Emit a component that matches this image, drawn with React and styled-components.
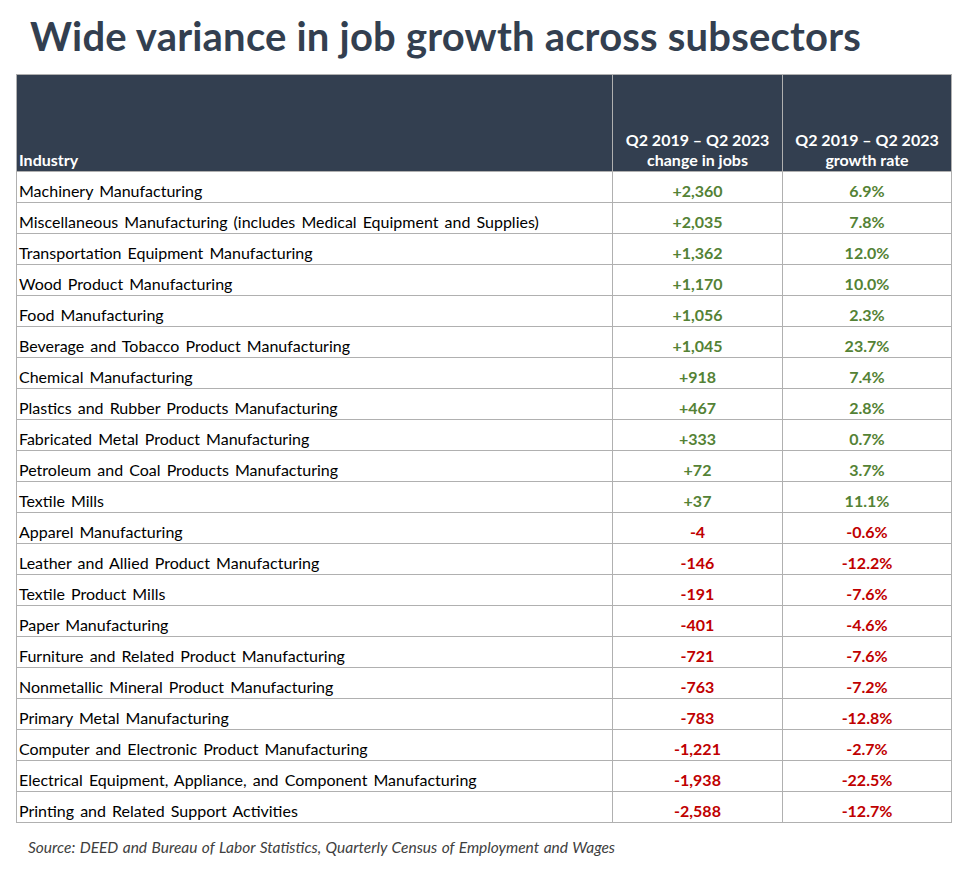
import React from "react"
import styled, { createGlobalStyle } from "styled-components"

const rows = [
  ["Machinery Manufacturing", "+2,360", "6.9%"],
  ["Miscellaneous Manufacturing (includes Medical Equipment and Supplies)", "+2,035", "7.8%"],
  ["Transportation Equipment Manufacturing", "+1,362", "12.0%"],
  ["Wood Product Manufacturing", "+1,170", "10.0%"],
  ["Food Manufacturing", "+1,056", "2.3%"],
  ["Beverage and Tobacco Product Manufacturing", "+1,045", "23.7%"],
  ["Chemical Manufacturing", "+918", "7.4%"],
  ["Plastics and Rubber Products Manufacturing", "+467", "2.8%"],
  ["Fabricated Metal Product Manufacturing", "+333", "0.7%"],
  ["Petroleum and Coal Products Manufacturing", "+72", "3.7%"],
  ["Textile Mills", "+37", "11.1%"],
  ["Apparel Manufacturing", "-4", "-0.6%"],
  ["Leather and Allied Product Manufacturing", "-146", "-12.2%"],
  ["Textile Product Mills", "-191", "-7.6%"],
  ["Paper Manufacturing", "-401", "-4.6%"],
  ["Furniture and Related Product Manufacturing", "-721", "-7.6%"],
  ["Nonmetallic Mineral Product Manufacturing", "-763", "-7.2%"],
  ["Primary Metal Manufacturing", "-783", "-12.8%"],
  ["Computer and Electronic Product Manufacturing", "-1,221", "-2.7%"],
  ["Electrical Equipment, Appliance, and Component Manufacturing", "-1,938", "-22.5%"],
  ["Printing and Related Support Activities", "-2,588", "-12.7%"],
]

const App = () => {
  return (
    <Page>
      <GlobalStyle />
      <Title>Wide variance in job growth across subsectors</Title>
      <Table>
        <colgroup>
          <col style={{ width: 596 }} />
          <col style={{ width: 170 }} />
          <col style={{ width: 169 }} />
        </colgroup>
        <thead>
          <tr>
            <HeadCell>Industry</HeadCell>
            <HeadCell center>
              Q2 2019 – Q2 2023
              <br />
              change in jobs
            </HeadCell>
            <HeadCell center>
              Q2 2019 – Q2 2023
              <br />
              growth rate
            </HeadCell>
          </tr>
        </thead>
        <tbody>
          {rows.map(([name, change, rate]) => {
            const down = change.startsWith("-")
            return (
              <Row key={name}>
                <NameCell>{name}</NameCell>
                <NumCell down={down}>{change}</NumCell>
                <NumCell down={down}>{rate}</NumCell>
              </Row>
            )
          })}
        </tbody>
      </Table>
      <Source>Source: DEED and Bureau of Labor Statistics, Quarterly Census of Employment and Wages</Source>
    </Page>
  )
}

export default App

const GlobalStyle = createGlobalStyle`
  body {
    margin: 0;
    background: #fff;
    font-family: Lato, "Open Sans", sans-serif;
  }
`

const Page = styled.div`
  width: 953px;
  height: 869px;
  padding: 0 0 0 16px;
  box-sizing: border-box;
`

const Title = styled.h1`
  margin: 0;
  padding: 12px 0 0 14px;
  height: 74px;
  box-sizing: border-box;
  font-size: 40px;
  line-height: 48px;
  font-weight: 700;
  letter-spacing: 0.2px;
  color: #333f50;
  white-space: nowrap;
`

const Table = styled.table`
  width: 935px;
  border-collapse: collapse;
  table-layout: fixed;
  border: 1px solid #a6a6a6;
`

const HeadCell = styled.th`
  height: 97px;
  padding: 0 2px 1px;
  box-sizing: border-box;
  background: #333f50;
  color: #fff;
  font-size: 16px;
  line-height: 20px;
  font-weight: 700;
  text-align: ${p => (p.center ? "center" : "left")};
  vertical-align: bottom;
  border: 1px solid #b0b0b0;
`

const Row = styled.tr`
  height: 31px;
`

const NameCell = styled.td`
  padding: 0 2px 1px;
  font-size: 16px;
  line-height: 20px;
  word-spacing: 2px;
  color: #000;
  vertical-align: bottom;
  white-space: nowrap;
  border: 1px solid #b0b0b0;
`

const NumCell = styled(NameCell)`
  text-align: center;
  font-weight: 700;
  word-spacing: 0;
  color: ${p => (p.down ? "#c00000" : "#548235")};
`

const Source = styled.p`
  margin: 15px 0 0 12px;
  font-size: 15.5px;
  font-style: italic;
  word-spacing: 0.8px;
  color: #404040;
`
